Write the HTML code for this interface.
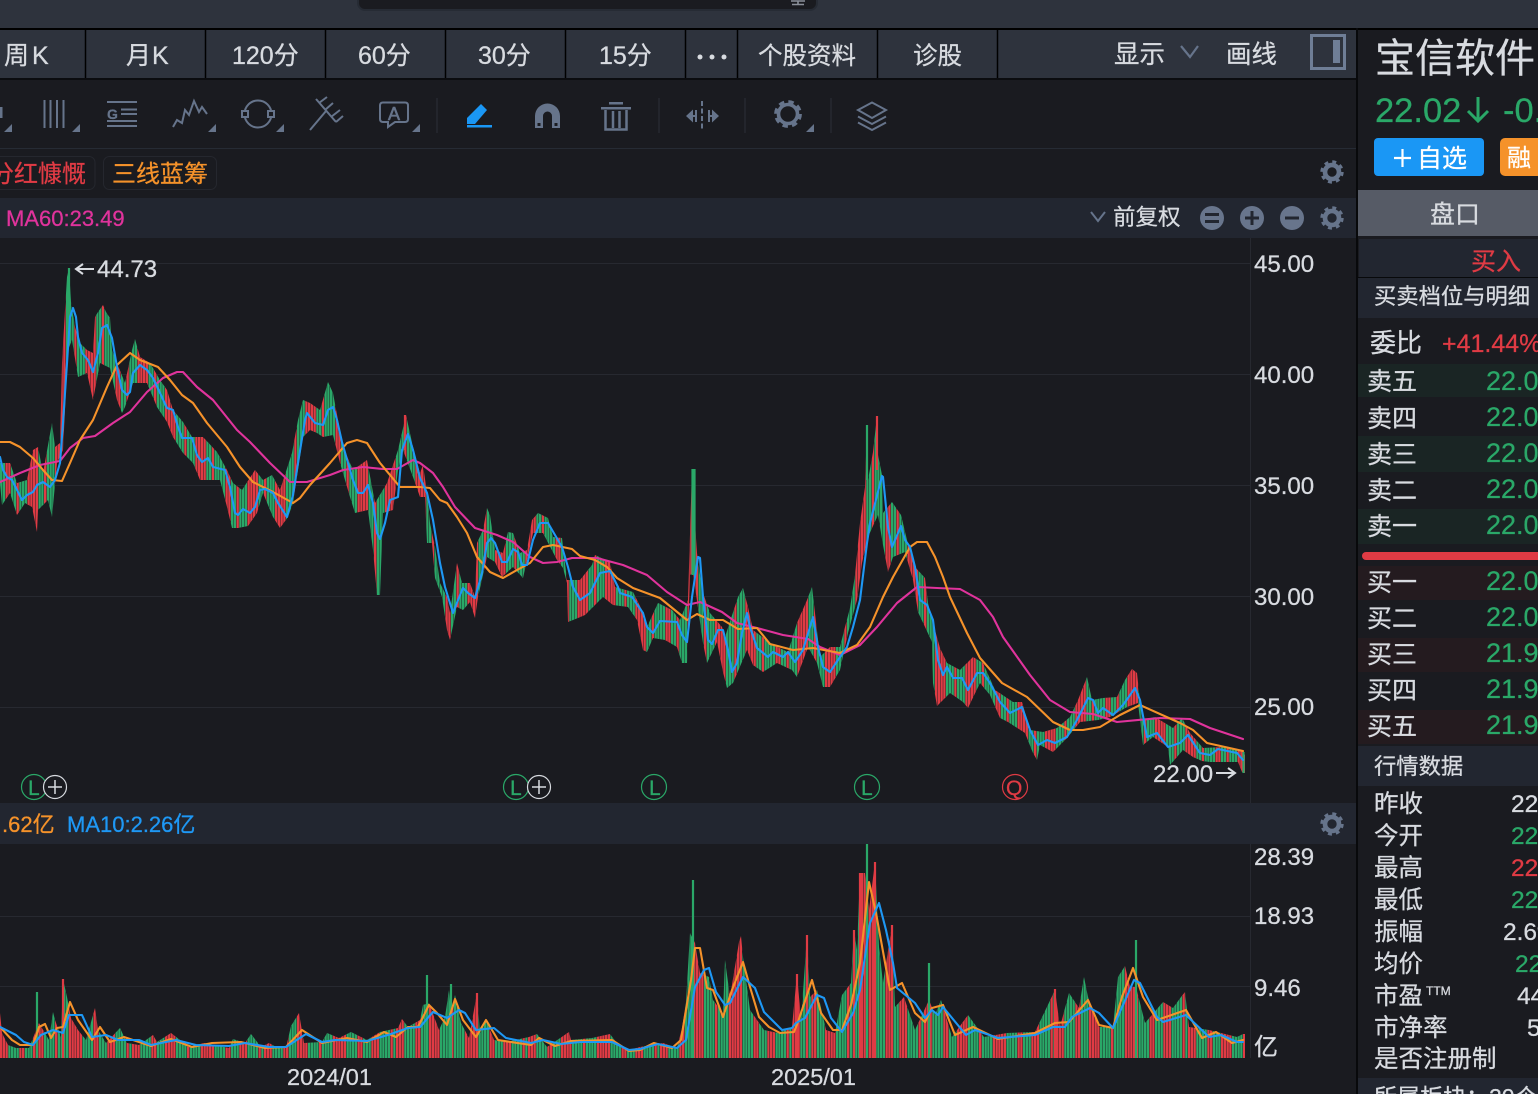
<!DOCTYPE html>
<html lang="zh">
<head>
<meta charset="utf-8">
<title>宝信软件</title>
<style>
html,body{margin:0;padding:0;background:#1a1b20;width:1538px;height:1094px;overflow:hidden}
svg{display:block;position:absolute;left:0;top:0}
text{font-family:"Liberation Sans","Noto Sans CJK SC",sans-serif;color:#d8dbe0;fill:currentColor;stroke:currentColor;stroke-width:.28px}
.i{fill:none;stroke:#66748b;stroke-width:2}
.f{fill:#66748b}
.l{fill:none;stroke-width:2.1;stroke-linejoin:round;stroke-linecap:round}
.t{font-size:25px}
.p{font-size:27px;color:#2aa868}
.v{font-size:24.5px}
.g{color:#2aa868}.r{color:#e03b44}
</style>
</head>
<body>
<svg width="1538" height="1094" viewBox="0 0 1538 1094" xmlns="http://www.w3.org/2000/svg">
<defs>
<pattern id="c" patternUnits="userSpaceOnUse" width="110" height="1094">
<rect width="110" height="1094" fill="#2aa868"/>
<path fill="#e03b44" d="M5.5 0H11V1094H5.5ZM16.5 0H19.25V1094H16.5ZM27.5 0H38.5V1094H27.5ZM44 0H46.75V1094H44ZM55 0H66V1094H55ZM74.25 0H77V1094H74.25ZM85.25 0H96.25V1094H85.25ZM101.75 0H104.5V1094H101.75Z"/>
</pattern>
<pattern id="w" patternUnits="userSpaceOnUse" width="132" height="1094">
<rect width="132" height="1094" fill="#2aa868"/>
<path fill="#e03b44" d="M0 0H8.25V1094H0ZM19.25 0H24.75V1094H19.25ZM33 0H44V1094H33ZM55 0H57.75V1094H55ZM68.75 0H82.5V1094H68.75ZM93.5 0H99V1094H93.5ZM107.25 0H115.5V1094H107.25ZM126.5 0H129.25V1094H126.5Z"/>
</pattern>
<pattern id="gap" patternUnits="userSpaceOnUse" width="2.75" height="1094">
<rect x="2.3" width="0.45" height="1094" fill="#1a1b20"/>
</pattern>
<g id="gear"><circle r="7" fill="none" stroke="#66748b" stroke-width="4.6"/><circle r="10" fill="none" stroke="#66748b" stroke-width="3.4" stroke-dasharray="3.85 4"/></g>
<polygon id="cp" points="0,463 10,463 17,483 27,480 33,450 38,447 43,473 52,423 55,447 60,443 62,363 65,310 67,277 69,268 71,302 75,327 80,343 87,350 93,353 95,317 98,312 103,305 106,312 110,318 112,350 117,363 125,383 132,350 135,339 140,357 150,363 160,380 167,390 173,410 183,422 192,437 203,437 217,452 227,470 233,483 242,490 255,470 263,480 272,475 280,490 292,453 298,420 303,400 310,403 320,410 328,382 333,393 343,447 353,470 367,460 375,503 387,483 398,450 406,415 413,447 420,473 423,465 427,493 430,523 435,547 440,583 447,597 450,613 457,563 462,583 470,583 475,597 477,543 483,530 487,508 490,515 495,550 503,553 508,532 513,533 520,553 527,550 532,520 538,513 548,518 553,537 562,538 567,580 580,580 592,565 595,555 610,562 615,587 633,592 642,610 647,627 658,603 672,610 680,620 688,600 692,469 695,469 695,523 697,553 702,590 710,613 722,627 725,637 738,597 743,588 748,607 753,630 773,645 788,652 797,623 807,600 812,587 815,613 820,657 830,647 840,647 845,627 850,608 855,575 860,523 865,487 867,425 868,480 873,452 877,416 878,455 882,475 883,513 892,502 901,515 907,540 915,567 925,578 928,603 933,623 940,648 947,663 960,670 973,657 983,663 995,690 1013,702 1022,702 1030,730 1043,732 1057,728 1070,717 1078,700 1087,677 1092,700 1103,698 1117,697 1125,680 1132,669 1137,673 1142,720 1155,717 1173,728 1182,718 1190,733 1203,748 1223,747 1242,750 1245,755 1245,773 1242,772 1238,762 1210,762 1202,761 1193,757 1183,750 1170,765 1168,747 1153,737 1143,745 1138,703 1127,707 1110,717 1098,720 1080,722 1067,738 1053,752 1040,745 1037,760 1033,753 1025,733 1008,722 1000,718 990,695 980,683 968,708 963,702 950,693 937,706 933,683 932,642 918,612 913,580 905,552 893,557 888,572 883,545 878,515 868,537 862,563 857,600 848,633 840,670 830,687 823,687 817,663 808,647 797,677 792,670 777,663 763,672 753,665 747,650 733,683 727,688 723,672 717,642 707,663 703,643 693,573 690,575 687,663 682,663 677,647 665,640 653,638 647,652 643,650 637,620 628,607 613,605 603,597 590,610 585,615 578,618 568,622 567,583 563,568 557,560 543,533 533,533 523,578 513,567 502,577 495,562 487,557 478,597 475,618 470,602 463,610 457,607 450,640 447,630 442,597 435,578 432,543 427,543 425,497 420,497 413,477 403,450 398,470 393,510 383,513 380,595 377,595 373,550 368,510 355,513 350,497 340,463 333,435 323,437 317,433 310,430 303,437 293,503 288,517 280,528 273,517 263,493 257,513 248,526 238,528 232,528 227,507 220,480 200,480 193,463 183,453 173,437 167,422 157,407 147,383 133,383 125,407 122,413 117,400 110,368 100,363 93,400 87,373 78,377 72,340 68,350 63,450 57,463 52,517 48,500 38,510 37,532 32,507 25,503 17,515 10,493 2,505 0,483"/>
<polygon id="vp" points="0,1013 2,1033 8,1045 16,1048 29,1048 35,1033 39,1023 49,1040 53,1012 55,1020 61,1037 63,979 67,997 71,1018 78,1030 86,1040 95,1008 98,1030 106,1043 120,1028 127,1043 139,1045 153,1035 157,1042 171,1033 180,1040 188,1047 204,1043 229,1048 233,1039 245,1043 251,1034 261,1047 269,1043 278,1048 286,1048 291,1026 299,1013 304,1043 322,1042 327,1033 339,1038 351,1032 367,1040 380,1032 398,1028 402,1019 408,1027 420,1020 423,1005 429,1003 439,1030 445,1017 449,990 451,1013 455,995 461,1023 469,1038 477,993 480,1033 486,1020 494,1040 506,1042 529,1037 537,1034 547,1047 569,1032 571,1040 592,1038 610,1034 616,1042 629,1050 640,1047 663,1043 677,1048 682,1028 686,1002 690,933 695,943 700,973 709,977 713,1000 723,1013 725,960 730,997 739,942 741,936 743,957 750,1010 764,1030 778,1033 792,1027 797,974 801,1020 807,935 810,997 817,990 826,1030 835,1033 842,995 851,983 854,930 857,950 860,873 865,873 869,910 875,862 879,947 883,983 892,925 895,1007 904,997 915,1030 929,1000 935,1015 941,1000 952,1037 968,1015 984,1037 1007,1033 1035,1032 1055,990 1060,1027 1069,993 1079,1008 1084,977 1088,997 1099,1027 1113,1027 1118,977 1125,966 1130,987 1136,987 1145,1023 1163,1002 1173,1008 1181,997 1185,992 1189,1027 1209,1030 1237,1037 1243,1034 1245,1034 1245,1058 0,1058"/>
</defs>

<!-- page backgrounds -->
<rect width="1538" height="1094" fill="#1a1b20"/>
<rect width="1538" height="28" fill="#2e333d"/>
<rect x="358" y="-6" width="459" height="16" rx="7" fill="#1a1b20" stroke="#262b34" stroke-width="2"/>
<path d="M791 1H805M798 1V4M792 4.5H804" stroke="#8a8f99" stroke-width="1.6" fill="none"/>
<rect y="28" width="1538" height="2" fill="#000"/>

<!-- tab bar -->
<rect y="30" width="1356" height="48" fill="#2e333d"/>
<rect y="78" width="1356" height="2" fill="#0b0c0f"/>
<path d="M85.5 30V78M205.5 30V78M325.5 30V78M445.5 30V78M565.5 30V78M685.5 30V78M737.5 30V78M877.5 30V78M997.5 30V78" stroke="#000" stroke-width="1.5"/>
<text class="t" x="4" y="64">周</text><text class="t" x="32" y="64">K</text>
<text class="t" x="126" y="64">月</text><text class="t" x="152" y="64">K</text>
<text class="t" x="232" y="64">120分</text>
<text class="t" x="358" y="64">60分</text>
<text class="t" x="478" y="64">30分</text>
<text class="t" x="599" y="64">15分</text>
<circle cx="700" cy="57" r="2.5" fill="#d8dbe0"/><circle cx="712" cy="57" r="2.5" fill="#d8dbe0"/><circle cx="724" cy="57" r="2.5" fill="#d8dbe0"/>
<text x="758" y="64" font-size="24.5">个股资料</text>
<text x="913" y="64" font-size="24.5">诊股</text>
<text x="1114" y="63" font-size="25.5">显示</text>
<path d="M1181 46L1190 57L1198 46" fill="none" stroke="#66748b" stroke-width="2.2"/>
<text x="1226" y="63" font-size="25.5">画线</text>
<rect x="1311.5" y="35.5" width="33" height="33" fill="none" stroke="#6f7e96" stroke-width="3"/>
<rect x="1333" y="40" width="7" height="23" fill="#6f7e96"/>

<!-- toolbar -->
<rect y="148" width="1356" height="1" fill="#262b34"/>
<rect x="0" y="107" width="2.5" height="11" class="f"/>
<path class="f" d="M12 124V132H4ZM80 124V132H72ZM216 124V132H208ZM284 124V132H276ZM420 124V132H412ZM814 124V132H806Z"/>
<path class="i" d="M44.5 100V128M50.5 100V128M57 100V128M63.5 100V128"/>
<path class="i" d="M107 102H137M121 109.5H137M121 114H137M107 121H137M107 126H137"/>
<text x="107" y="119" font-size="14" font-weight="700" style="color:#66748b">G</text>
<polyline class="i" points="173,127 177,120 182,123 185,110 189,115 194,101 199,112 202,107 207,114"/>
<circle class="i" cx="258" cy="114" r="13.5"/>
<rect x="242" y="111" width="6" height="6" fill="#1a1b20" stroke="#66748b" stroke-width="2"/><rect x="268" y="111" width="6" height="6" fill="#1a1b20" stroke="#66748b" stroke-width="2"/>
<path class="i" d="M310 130L326 111M316 99L336 122M319 103L327 97M325 110L333 103M331 117L340 110M336 122L343 116"/>
<path class="i" d="M383 102.5H405Q408 102.5 408 105.5V119Q408 122 405 122H395L388 127V122H383Q380 122 380 119V105.5Q380 102.5 383 102.5Z"/>
<text x="388" y="120" font-size="18" style="color:#66748b;stroke-width:.6px">A</text>
<path d="M437 98V133M659 98V133M745 98V133M831 98V133" stroke="#262930" stroke-width="1.5"/>
<path d="M467 118V124H475L487 110L481 104Z" fill="#1a97f5"/><rect x="467" y="125" width="25" height="2.5" fill="#1a97f5"/>
<path class="f" d="M535 128V116A12.5 12.5 0 0 1 560 116V128H552V116A4.5 4.5 0 0 0 543 116V128Z"/>
<rect x="537.5" y="123" width="3" height="3" fill="#1a1b20"/><rect x="554.5" y="123" width="3" height="3" fill="#1a1b20"/>
<path class="f" d="M609 102H623V104.5H609ZM601 107H631V109.5H601Z"/>
<path fill="none" stroke="#66748b" stroke-width="2.5" d="M605.5 110V129.5H626.5V110M613 111V128M619.5 111V128"/>
<path class="f" d="M686 116L693 109.5V122.5ZM719 116L712 109.5V122.5ZM695 110H697V122H695ZM708 110H710V122H708ZM693 115H697V117H693ZM708 115H712V117H708Z"/>
<path d="M702 101V131" stroke="#66748b" stroke-width="2" stroke-dasharray="5 2.5"/>
<g transform="translate(788 114)"><circle r="9.5" fill="none" stroke="#66748b" stroke-width="3.6"/><circle r="12.2" fill="none" stroke="#66748b" stroke-width="3.4" stroke-dasharray="5.4 4.18"/></g>
<path class="i" d="M872 102.5L886 110L872 118L858 110ZM858 116.5L872 124L886 116.5M858 122.5L872 130L886 122.5"/>

<!-- tag row -->
<rect x="-12" y="156.5" width="107" height="33" rx="6" fill="none" stroke="#25272e"/>
<rect x="103.5" y="156.5" width="113" height="33" rx="6" fill="none" stroke="#25272e"/>
<text x="-10" y="182" font-size="24" style="color:#e03b44">分红慷慨</text>
<text x="112" y="182" font-size="24" style="color:#f5922a">三线蓝筹</text>
<use href="#gear" transform="translate(1332 172)"/>

<!-- MA header -->
<rect y="198" width="1356" height="40" fill="#222630"/>
<text x="6" y="226" font-size="22" style="color:#e0339c">MA60:23.49</text>
<path d="M1091 212L1098 221L1105 212" fill="none" stroke="#66748b" stroke-width="2"/>
<text x="1113" y="225" font-size="22.5">前复权</text>
<circle cx="1212" cy="218" r="12" fill="#68758c"/><path d="M1205 214.5H1219M1205 221.5H1219" stroke="#222630" stroke-width="3"/>
<circle cx="1252" cy="218" r="12" fill="#68758c"/><path d="M1245 218H1259M1252 211V225" stroke="#222630" stroke-width="3"/>
<circle cx="1292" cy="218" r="12" fill="#68758c"/><path d="M1285 218H1299" stroke="#222630" stroke-width="3"/>
<use href="#gear" transform="translate(1332 218)"/>

<!-- grid -->
<path d="M0 263.5H1250M0 374.5H1250M0 485.5H1250M0 596.5H1250M0 707.5H1250M1250.5 238V803M0 916.5H1250M0 986.5H1250M1250.5 844V1058" stroke="#272930" stroke-width="1"/>

<!-- candles -->
<use href="#cp" fill="url(#c)"/>
<use href="#cp" fill="url(#gap)"/>
<path d="M69 268V330M378 520V595M692.500 469V575M694.500 469V575M867 425V480M1243.500 752V773" stroke="#2aa868" stroke-width="2.2" fill="none"/>
<path d="M877 416V470M405 415V450" stroke="#e03b44" stroke-width="2.2" fill="none"/>

<!-- price MAs -->
<polyline class="l" stroke="#e0339c" points="0,482 20,473 40,465 60,461 70,448 83,438 95,436 113,423 130,412 147,392 163,378 177,372 183,372 197,387 213,400 237,430 250,442 270,463 290,482 307,482 330,475 343,470 363,467 383,469 397,469 413,460 420,463 433,473 443,487 455,507 475,528 497,535 513,542 530,557 543,563 557,562 572,558 597,558 623,565 647,575 667,592 687,605 700,602 722,612 737,623 757,628 783,635 808,639 820,647 840,655 860,645 877,627 897,603 917,587 937,588 960,589 980,600 993,617 1003,637 1030,675 1050,700 1070,712 1093,714 1117,722 1160,718 1190,719 1210,728 1243,739"/>
<polyline class="l" stroke="#f5922a" points="0,442 10,442 20,447 33,458 43,470 52,480 62,481 70,463 80,440 93,420 107,387 117,365 130,353 140,360 158,367 170,380 182,395 193,403 207,423 227,447 240,467 253,482 273,492 293,503 300,498 310,485 330,463 347,443 357,440 367,443 380,463 400,487 420,487 430,488 440,500 447,503 457,517 467,533 477,557 490,572 503,578 517,570 530,563 543,547 553,545 572,549 580,556 595,560 607,567 617,578 633,588 660,598 687,620 697,614 710,620 723,620 738,629 757,628 770,644 793,650 813,648 840,653 857,645 870,627 883,597 893,577 910,547 917,542 927,542 935,557 943,577 950,597 967,633 980,658 1002,683 1027,697 1053,722 1070,730 1083,730 1100,727 1120,715 1140,705 1180,723 1193,730 1207,743 1243,751"/>
<polyline class="l" stroke="#1e98f5" points="0,457 3,470 7,477 12,480 17,490 22,500 27,495 33,492 37,485 43,482 50,487 55,480 60,463 63,423 67,363 70,317 73,308 76,317 78,337 82,353 88,360 93,372 98,353 102,328 107,325 112,338 117,367 122,390 127,395 130,392 133,373 140,365 147,370 153,378 160,393 167,408 173,410 178,427 182,438 192,438 197,455 202,462 208,458 213,467 225,470 230,487 235,513 238,515 243,509 250,513 255,507 260,490 265,489 273,493 278,503 287,517 293,495 298,463 305,420 307,413 315,423 323,425 328,410 333,407 337,420 342,442 348,463 353,480 358,493 363,493 368,485 373,503 377,533 380,539 385,523 390,500 398,497 402,450 408,434 413,450 420,478 427,493 433,520 440,563 445,587 453,613 458,600 463,588 468,593 475,598 482,573 487,543 491,538 495,543 502,562 507,562 513,549 518,552 522,565 527,565 533,540 540,523 548,523 555,535 562,547 568,567 573,587 580,600 590,593 600,573 610,571 618,587 620,593 632,597 643,613 647,627 653,633 660,621 677,622 682,635 687,642 692,597 698,557 700,558 703,597 708,640 712,644 718,630 723,630 728,650 732,672 737,663 742,633 747,613 750,627 757,648 768,657 773,652 783,657 788,652 795,662 803,650 813,617 818,647 823,667 830,672 840,657 847,647 853,627 860,600 867,543 870,523 882,476 883,477 888,527 892,547 895,540 901,526 905,540 910,547 915,567 920,600 927,605 933,620 938,660 943,675 947,667 953,678 962,678 968,690 977,673 983,673 990,683 1000,702 1010,713 1022,707 1030,730 1038,745 1047,740 1055,743 1067,737 1077,720 1088,698 1093,700 1098,713 1103,708 1113,715 1123,705 1135,688 1140,700 1147,737 1157,733 1168,747 1180,743 1188,735 1200,753 1210,755 1218,749 1237,753 1243,760"/>

<!-- price labels -->
<text x="1254" y="272" font-size="24">45.00</text>
<text x="1254" y="383" font-size="24">40.00</text>
<text x="1254" y="494" font-size="24">35.00</text>
<text x="1254" y="605" font-size="24">30.00</text>
<text x="1254" y="715" font-size="24">25.00</text>
<path d="M94 269H77M83 264L76 269L83 274" fill="none" stroke="#d8dbe0" stroke-width="2"/>
<text x="97" y="277" font-size="24">44.73</text>
<text x="1153" y="782" font-size="24">22.00</text>
<path d="M1216 773H1234M1228 768L1235 773L1228 778" fill="none" stroke="#d8dbe0" stroke-width="2"/>

<!-- markers -->
<g fill="none" stroke="#2aa868" stroke-width="1.2"><circle cx="34" cy="787" r="12.5"/><circle cx="516" cy="787" r="12.5"/><circle cx="654" cy="787" r="12.5"/><circle cx="867" cy="787" r="12.5"/></g>
<circle cx="55" cy="787" r="11.5" fill="#1a1b20" stroke="#d8dbe0" stroke-width="1.2"/>
<circle cx="539" cy="787" r="11.5" fill="#1a1b20" stroke="#d8dbe0" stroke-width="1.2"/>
<path d="M48 787H62M55 780V794M532 787H546M539 780V794" stroke="#d8dbe0" stroke-width="1.5"/>
<circle cx="1015" cy="787" r="12.5" fill="none" stroke="#e03b44" stroke-width="1.2"/>
<text class="g" x="28" y="795" font-size="21">L</text>
<text class="g" x="510" y="795" font-size="21">L</text>
<text class="g" x="649" y="795" font-size="21">L</text>
<text class="g" x="861" y="795" font-size="21">L</text>
<text class="r" x="1006" y="795" font-size="21">Q</text>

<!-- volume header -->
<rect y="803" width="1356" height="41" fill="#222630"/>
<text x="2" y="832" font-size="22" style="color:#f5922a">.62亿</text>
<text x="67" y="832" font-size="22" style="color:#1e98f5">MA10:2.26亿</text>
<use href="#gear" transform="translate(1332 824)"/>

<!-- volume bars -->
<use href="#vp" fill="url(#w)"/>
<use href="#vp" fill="url(#gap)"/>
<path d="M37 1058V992M427 1058V975M451 1058V984M693 1058V880M867 1058V844M929 1058V963M1136 1058V940" stroke="#2aa868" stroke-width="2.2" fill="none"/>
<path d="M63 1058V979M477 1058V993M797 1058V974M807 1058V935M854 1058V930M860 1058V873M875 1058V862M892 1058V925M1055 1058V989" stroke="#e03b44" stroke-width="2.2" fill="none"/>
<polyline class="l" stroke="#f5922a" points="0,1027 12,1040 20,1045 33,1045 39,1027 45,1024 51,1038 57,1028 63,1027 70,1002 78,1020 92,1040 100,1027 110,1042 124,1037 151,1046 171,1039 192,1047 212,1043 241,1042 265,1048 286,1047 302,1030 322,1043 347,1038 367,1042 384,1032 396,1037 408,1027 418,1027 429,1005 437,1013 447,1025 455,999 463,1020 476,1037 486,1020 498,1040 531,1045 539,1038 555,1046 571,1041 612,1040 629,1051 640,1050 654,1043 672,1048 681,1040 691,980 695,948 700,948 707,988 713,990 723,1017 732,990 743,962 750,987 759,1017 769,1027 780,1033 794,1032 798,1022 812,980 821,1013 833,1030 842,1030 851,1005 860,963 869,882 876,913 890,990 902,983 915,1013 925,1022 932,1008 943,1005 955,1035 973,1027 998,1039 1035,1033 1055,1023 1069,1022 1088,1000 1099,1025 1113,1028 1122,997 1133,968 1143,997 1157,1020 1186,1010 1202,1038 1216,1032 1232,1043 1243,1040"/>
<polyline class="l" stroke="#1e98f5" points="0,1027 16,1035 24,1042 33,1045 41,1035 53,1030 63,1033 69,1015 82,1015 92,1037 106,1035 118,1040 139,1040 151,1045 176,1040 196,1045 229,1046 245,1043 269,1047 286,1047 306,1034 322,1042 335,1040 367,1041 388,1035 408,1028 420,1027 433,1012 447,1018 459,1010 465,1013 476,1030 494,1028 506,1038 531,1043 543,1040 561,1044 580,1042 612,1042 629,1050 640,1049 658,1044 677,1048 686,1040 695,987 704,970 709,968 716,992 725,1005 730,1003 743,977 755,988 764,1012 782,1030 792,1028 796,1023 805,1018 817,995 824,998 831,1018 842,1032 853,1013 860,990 870,923 879,903 886,930 893,963 897,988 915,1003 925,1018 932,1010 938,1015 943,1007 966,1035 975,1030 998,1038 1035,1035 1053,1027 1065,1027 1072,1017 1090,1008 1099,1013 1113,1028 1134,980 1140,983 1157,1017 1163,1022 1186,1015 1209,1037 1221,1035 1237,1042 1243,1042"/>

<!-- volume axis labels -->
<text x="1254" y="865" font-size="24">28.39</text>
<text x="1254" y="924" font-size="24">18.93</text>
<text x="1254" y="996" font-size="24">9.46</text>
<text x="1254" y="1055" font-size="24">亿</text>
<text x="287" y="1085" font-size="23.5">2024/01</text>
<text x="771" y="1085" font-size="23.5">2025/01</text>

<!-- right panel -->
<rect x="1356" y="28" width="2" height="1066" fill="#08090b"/>
<rect x="1358" y="30" width="180" height="1064" fill="#1a1b20"/>
<text x="1375" y="72" font-size="40">宝信软件</text>
<text class="g" x="1375" y="122" font-size="34.5">22.02</text>
<path d="M1478 97V121M1468 111L1478 121L1488 111" fill="none" stroke="#2aa868" stroke-width="3"/>
<text class="g" x="1503" y="122" font-size="34.5">-0.11</text>
<rect x="1374" y="138" width="110" height="38" rx="4" fill="#1a97f5"/>
<path d="M1394 158H1411M1402.5 149V167" stroke="#fff" stroke-width="2.2"/>
<text x="1417" y="167" font-size="25" style="color:#fff">自选</text>
<rect x="1500" y="138" width="50" height="38" rx="5" fill="#f5922a"/>
<text x="1507" y="166" font-size="24" style="color:#fff">融</text>
<rect x="1358" y="190" width="180" height="46" fill="#565b66"/>
<text x="1430" y="223" font-size="25">盘口</text>
<rect x="1359" y="239" width="179" height="38" fill="#222630"/>
<text class="r" x="1471" y="270" font-size="25">买入</text>
<rect x="1358" y="277" width="180" height="1" fill="#08090b"/>
<rect x="1358" y="278" width="180" height="40" fill="#222630"/>
<text x="1374" y="304" font-size="22.3">买卖档位与明细</text>
<text x="1370" y="352" font-size="26">委比</text>
<text class="r" x="1442" y="352" font-size="25">+41.44%</text>

<rect x="1358" y="364" width="180" height="33" fill="#1a2524"/>
<rect x="1358" y="436" width="180" height="36" fill="#1a2524"/>
<rect x="1358" y="509" width="180" height="35" fill="#1a2524"/>
<text class="t" x="1367" y="390">卖五</text><text class="p" x="1486" y="390">22.07</text>
<text class="t" x="1367" y="427">卖四</text><text class="p" x="1486" y="426">22.06</text>
<text class="t" x="1367" y="463">卖三</text><text class="p" x="1486" y="462">22.05</text>
<text class="t" x="1367" y="499">卖二</text><text class="p" x="1486" y="498">22.04</text>
<text class="t" x="1367" y="535">卖一</text><text class="p" x="1486" y="534">22.03</text>
<rect x="1362" y="552" width="190" height="8" rx="4" fill="#e03b44"/>
<rect x="1358" y="566" width="180" height="34" fill="#241b1f"/>
<rect x="1358" y="638" width="180" height="34" fill="#241b1f"/>
<rect x="1358" y="710" width="180" height="34" fill="#241b1f"/>
<text class="t" x="1367" y="591">买一</text><text class="p" x="1486" y="590">22.02</text>
<text class="t" x="1367" y="627">买二</text><text class="p" x="1486" y="626">22.01</text>
<text class="t" x="1367" y="663">买三</text><text class="p" x="1486" y="662">21.99</text>
<text class="t" x="1367" y="699">买四</text><text class="p" x="1486" y="698">21.98</text>
<text class="t" x="1367" y="735">买五</text><text class="p" x="1486" y="734">21.97</text>

<rect x="1358" y="746" width="180" height="40" fill="#222630"/>
<text x="1374" y="774" font-size="22.3">行情数据</text>
<text class="v" x="1374" y="812">昨收</text><text class="v" x="1511" y="812">22.42</text>
<text class="v" x="1374" y="844">今开</text><text class="v g" x="1511" y="844">22.31</text>
<text class="v" x="1374" y="876">最高</text><text class="v r" x="1511" y="876">22.44</text>
<text class="v" x="1374" y="908">最低</text><text class="v g" x="1511" y="908">22.00</text>
<text class="v" x="1374" y="940">振幅</text><text class="v" x="1503" y="940">2.6%</text>
<text class="v" x="1374" y="972">均价</text><text class="v g" x="1515" y="972">22.14</text>
<text class="v" x="1374" y="1004">市盈</text><text x="1426" y="995" font-size="12">TTM</text><text class="v" x="1517" y="1004">44.1</text>
<text class="v" x="1374" y="1036">市净率</text><text class="v" x="1527" y="1036">5.2</text>
<text class="v" x="1374" y="1067">是否注册制</text>
<rect x="1358" y="1078" width="180" height="16" fill="#222630"/>
<text x="1374" y="1105" font-size="23">所属板块：20个</text>
</svg>
</body>
</html>
